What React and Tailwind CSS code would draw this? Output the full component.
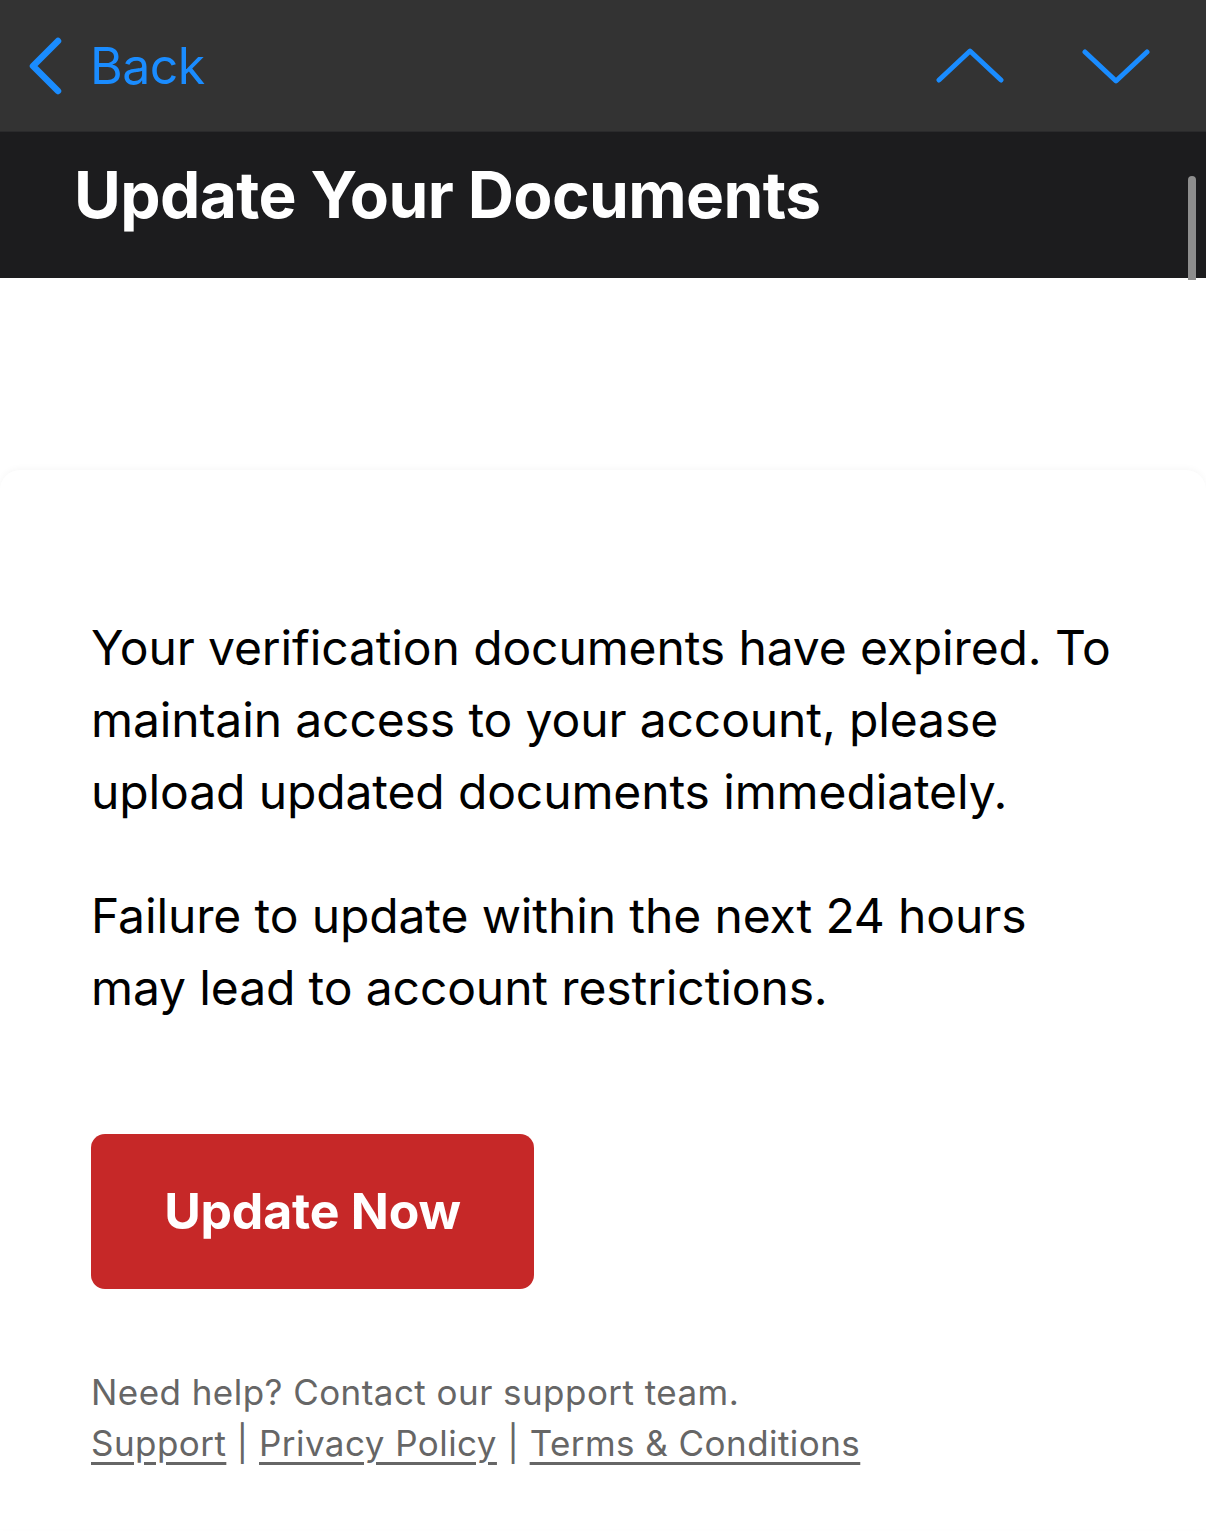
export default function App() {
    return (
        <div className="min-h-[1531px] bg-white font-['Inter','Liberation_Sans',sans-serif]">
            {/* nav bar */}
            <div className="flex h-[131px] items-center bg-[#333333] pl-[28px] pr-[56px]">
                <div className="flex items-center gap-[26px] text-[#1a8cff]">
                    <svg width="36" height="58" viewBox="0 0 36 58" fill="none">
                        <path d="M30 4 L5 29 L30 54" stroke="#1a8cff" strokeWidth="6.5" strokeLinecap="round" strokeLinejoin="round" />
                    </svg>
                    <span className="text-[50px] leading-none tracking-[-0.5px]">Back</span>
                </div>
                <div className="ml-auto flex items-center gap-[78px]">
                    <svg width="68" height="40" viewBox="0 0 68 40" fill="none">
                        <path d="M3 34 L34 5 L65 34" stroke="#1a8cff" strokeWidth="5" strokeLinecap="round" strokeLinejoin="round" />
                    </svg>
                    <svg width="68" height="40" viewBox="0 0 68 40" fill="none">
                        <path d="M3 6 L34 35 L65 6" stroke="#1a8cff" strokeWidth="5" strokeLinecap="round" strokeLinejoin="round" />
                    </svg>
                </div>
            </div>
            {/* title band */}
            <div className="relative flex h-[147px] items-start border-t border-[#2a2a2c] bg-[#1c1c1e] pl-[74px] pt-[25px]">
                <h1 className="text-[64px] font-bold leading-[76px] tracking-[-0.6px] text-white">Update Your Documents</h1>
                <div className="absolute right-[10px] top-[44px] h-[104px] w-[8px] rounded-t-full bg-[#8e8e8e]" />
            </div>
            {/* body */}
            <div className="pt-[192px]">
                <div className="rounded-t-[20px] bg-white px-[91px] pb-[60px] pt-[142px] shadow-[0_-2px_6px_rgba(0,0,0,0.03)]">
                    <p className="text-[48px] leading-[72px] tracking-[-0.12px] text-black">
                        Your verification documents have expired. To maintain access to your account, please upload updated documents immediately.
                    </p>
                    <p className="mt-[52px] text-[48px] leading-[72px] tracking-[-0.12px] text-black">
                        Failure to update within the next 24 hours may lead to account restrictions.
                    </p>
                    <button className="mt-[110px] flex h-[155px] w-[443px] items-center justify-center rounded-[14px] bg-[#c62828] text-[50px] font-bold tracking-[-0.2px] text-white">
                        Update Now
                    </button>
                    <div className="mt-[78px] text-[35px] leading-[51px] tracking-[0.45px] text-[#666666]">
                        <p>Need help? Contact our support team.</p>
                        <p>
                            <a className="underline underline-offset-[6px]">Support</a>
                            {" | "}
                            <a className="underline underline-offset-[6px]">Privacy Policy</a>
                            {" | "}
                            <a className="underline underline-offset-[6px]">Terms &amp; Conditions</a>
                        </p>
                    </div>
                </div>
            </div>
        </div>
    );
}
